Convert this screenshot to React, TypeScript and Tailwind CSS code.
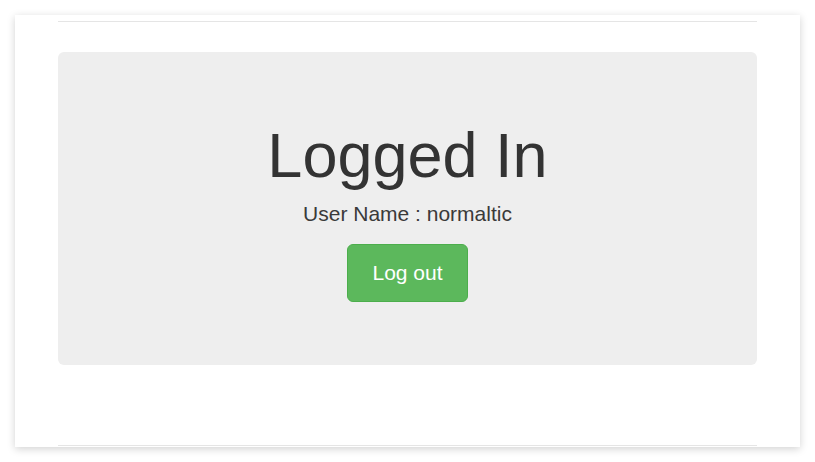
export default function App() {
  return (
    <div className="min-h-[462px] w-[815px] bg-white pt-[15px] pl-[15px]" style={{ fontFamily: '"Liberation Sans", Arial, sans-serif' }}>
      <div className="w-[785px] h-[432px] bg-white shadow-[0_2px_8px_rgba(0,0,0,0.18)] px-[43px] pt-[6px] flex flex-col">
        <div className="border-t border-[#e5e5e5]" />
        <div className="mt-[30px] h-[313px] rounded-[6px] bg-[#eeeeee] flex flex-col items-center pt-[69px] text-[#333333]">
          <h1 className="text-[63px] leading-[1.1] m-0">Logged In</h1>
          <p className="text-[21px] font-light leading-[1.4] mt-[9px] text-[#3a3a3a]">User Name : normaltic</p>
          <button className="mt-[15px] h-[58px] px-[24px] rounded-[6px] bg-[#5cb85c] border border-[#4cae4c] text-white text-[21px]">
            Log out
          </button>
        </div>
        <div className="flex-1" />
        <div className="border-t border-[#e5e5e5] mb-[1px]" />
      </div>
    </div>
  )
}
